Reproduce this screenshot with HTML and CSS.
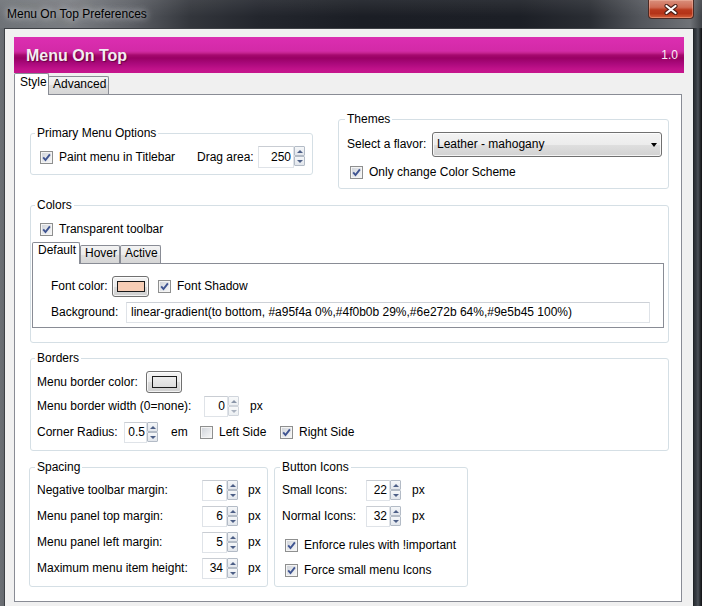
FILE: index.html
```html
<!DOCTYPE html>
<html>
<head>
<meta charset="utf-8">
<title>Menu On Top Preferences</title>
<link rel="stylesheet" href="styles.css">
</head>
<body>
<div class="window">
  <div class="titlebar">
    <span class="title">Menu On Top Preferences</span>
    <span class="close">
      <svg width="16" height="11" viewBox="0 0 16 11"><path d="M3.5 2 L12.5 9 M12.5 2 L3.5 9" stroke="#4a2018" stroke-width="4.2" stroke-linecap="round" fill="none"/><path d="M3.5 2 L12.5 9 M12.5 2 L3.5 9" stroke="#fff" stroke-width="2.2" stroke-linecap="round" fill="none"/></svg>
    </span>
  </div>
  <div class="client">
    <div class="header">
      <span class="h-title">Menu On Top</span>
      <span class="h-ver">1.0</span>
    </div>
    <div class="tabs">
      <span class="tab sel t-style">Style</span>
      <span class="tab t-adv">Advanced</span>
    </div>
    <div class="panel">
      <div class="row-top">
        <fieldset class="grp g-primary">
          <legend>Primary Menu Options</legend>
          <div class="line h22 mt6">
            <span class="cb on ml9"><svg viewBox="0 0 11 11"><path d="M2.2 5.3 L4.5 8 L8.9 2.3" fill="none" stroke="#3f5491" stroke-width="1.9"/></svg></span>
            <span class="lb w138 ml6">Paint menu in Titlebar</span>
            <span class="lb w61">Drag area:</span>
            <span class="num w36 h22">250</span>
            <span class="spinner"><span class="up"></span><span class="dn"></span></span>
          </div>
        </fieldset>
        <fieldset class="grp g-themes">
          <legend>Themes</legend>
          <div class="line h25 mt6">
            <span class="lb w85 ml8">Select a flavor:</span>
            <span class="select"><span>Leather - mahogany</span><span class="sel-arrow"></span></span>
          </div>
          <div class="line h16 mt7">
            <span class="cb on ml11"><svg viewBox="0 0 11 11"><path d="M2.2 5.3 L4.5 8 L8.9 2.3" fill="none" stroke="#3f5491" stroke-width="1.9"/></svg></span>
            <span class="lb ml6">Only change Color Scheme</span>
          </div>
        </fieldset>
      </div>

      <fieldset class="grp g-colors">
        <legend>Colors</legend>
        <div class="line h16 mt9">
          <span class="cb on ml9"><svg viewBox="0 0 11 11"><path d="M2.2 5.3 L4.5 8 L8.9 2.3" fill="none" stroke="#3f5491" stroke-width="1.9"/></svg></span>
          <span class="lb ml6">Transparent toolbar</span>
        </div>
        <div class="tabbox">
          <div class="itabs">
            <span class="itab sel w48">Default</span>
            <span class="itab w40">Hover</span>
            <span class="itab w41">Active</span>
          </div>
          <div class="ipanel">
            <div class="line mt12">
              <span class="lb w61 ml18">Font color:</span>
              <span class="cbtn w37"><span class="sw sw-peach"></span></span>
              <span class="cb on ml9"><svg viewBox="0 0 11 11"><path d="M2.2 5.3 L4.5 8 L8.9 2.3" fill="none" stroke="#3f5491" stroke-width="1.9"/></svg></span>
              <span class="lb ml6">Font Shadow</span>
            </div>
            <div class="line mt5">
              <span class="lb w75 ml18">Background:</span>
              <span class="text-in">linear-gradient(to bottom, #a95f4a 0%,#4f0b0b 29%,#6e272b 64%,#9e5b45 100%)</span>
            </div>
          </div>
        </div>
      </fieldset>

      <fieldset class="grp g-borders">
        <legend>Borders</legend>
        <div class="line h22 mt6">
          <span class="lb w109 ml6">Menu border color:</span>
          <span class="cbtn w36 h22"><span class="sw sw-gray"></span></span>
        </div>
        <div class="line mt3">
          <span class="lb w167 ml6">Menu border width (0=none):</span>
          <span class="num w24">0</span>
          <span class="spinner dis"><span class="up"></span><span class="dn"></span></span>
          <span class="lb ml11">px</span>
        </div>
        <div class="line mt5">
          <span class="lb w87 ml6">Corner Radius:</span>
          <span class="num w23 pr1">0.5</span>
          <span class="spinner"><span class="up"></span><span class="dn"></span></span>
          <span class="lb w29 ml13">em</span>
          <span class="cb"></span>
          <span class="lb w61 ml6">Left Side</span>
          <span class="cb on"><svg viewBox="0 0 11 11"><path d="M2.2 5.3 L4.5 8 L8.9 2.3" fill="none" stroke="#3f5491" stroke-width="1.9"/></svg></span>
          <span class="lb ml6">Right Side</span>
        </div>
      </fieldset>

      <div class="row-bottom">
        <fieldset class="grp g-spacing">
          <legend>Spacing</legend>
          <div class="line mt6">
            <span class="lb w165 ml7">Negative toolbar margin:</span>
            <span class="num w25 pr3">6</span>
            <span class="spinner"><span class="up"></span><span class="dn"></span></span>
            <span class="lb ml10">px</span>
          </div>
          <div class="line mt5">
            <span class="lb w165 ml7">Menu panel top margin:</span>
            <span class="num w25 pr3">6</span>
            <span class="spinner"><span class="up"></span><span class="dn"></span></span>
            <span class="lb ml10">px</span>
          </div>
          <div class="line mt5">
            <span class="lb w165 ml7">Menu panel left margin:</span>
            <span class="num w25 pr3">5</span>
            <span class="spinner"><span class="up"></span><span class="dn"></span></span>
            <span class="lb ml10">px</span>
          </div>
          <div class="line mt5">
            <span class="lb w165 ml7">Maximum menu item height:</span>
            <span class="num w25 pr3">34</span>
            <span class="spinner"><span class="up"></span><span class="dn"></span></span>
            <span class="lb ml10">px</span>
          </div>
        </fieldset>
        <fieldset class="grp g-icons">
          <legend>Button Icons</legend>
          <div class="line mt6">
            <span class="lb w84 ml7">Small Icons:</span>
            <span class="num w24">22</span>
            <span class="spinner"><span class="up"></span><span class="dn"></span></span>
            <span class="lb ml11">px</span>
          </div>
          <div class="line mt5">
            <span class="lb w84 ml7">Normal Icons:</span>
            <span class="num w24">32</span>
            <span class="spinner"><span class="up"></span><span class="dn"></span></span>
            <span class="lb ml11">px</span>
          </div>
          <div class="line h16 mt10">
            <span class="cb on ml10"><svg viewBox="0 0 11 11"><path d="M2.2 5.3 L4.5 8 L8.9 2.3" fill="none" stroke="#3f5491" stroke-width="1.9"/></svg></span>
            <span class="lb ml6">Enforce rules with !important</span>
          </div>
          <div class="line h16 mt9">
            <span class="cb on ml10"><svg viewBox="0 0 11 11"><path d="M2.2 5.3 L4.5 8 L8.9 2.3" fill="none" stroke="#3f5491" stroke-width="1.9"/></svg></span>
            <span class="lb ml6">Force small menu Icons</span>
          </div>
        </fieldset>
      </div>
    </div>
  </div>
</div>
</body>
</html>
```

FILE: styles.css
```css
* { box-sizing: border-box; }
html, body { margin: 0; padding: 0; }
body {
  font-family: "Liberation Sans", Arial, sans-serif;
  font-size: 12px;
  color: #000;
  background: #1a1c20;
}
.window {
  width: 702px;
  height: 606px;
  display: flex;
  flex-direction: column;
  overflow: hidden;
  background: linear-gradient(to right, #6b6f74 0, #666a6f 4px, #f0f0f0 4px, #f0f0f0 693px, #17191c 693px, #2c3035 694px, #353a40 696px, #4c5158 698px, #2a2d31 700px, #101114 702px);
}

/* ---------- title bar ---------- */
.titlebar {
  height: 28px;
  flex: none;
  display: flex;
  align-items: flex-start;
  padding-left: 7px;
  background:
    linear-gradient(to bottom, rgba(255,255,255,0.08), rgba(255,255,255,0) 60%),
    linear-gradient(to right, #6e7277 0px, #7a7d82 70px, #5d6066 130px, #33363c 190px, #23262d 260px, #1b1e25 360px, #1c1f26 520px, #2a2d33 590px, #52555b 640px, #6f7277 690px, #3e4146 702px);
}
.title {
  margin-top: 7px;
  line-height: 15px;
  font-size: 12px;
  color: #000;
  text-shadow: 0 0 6px rgba(220,222,226,0.9), 0 0 10px rgba(200,202,206,0.7);
}
.close {
  margin-left: auto;
  margin-right: 8px;
  width: 46px;
  height: 19px;
  display: flex;
  align-items: center;
  justify-content: center;
  border: 1px solid #4b2a24;
  border-top: none;
  border-radius: 0 0 4px 4px;
  background: linear-gradient(to bottom, #d98f7c 0%, #cf6c55 40%, #b9391d 55%, #b43318 75%, #d4603a 100%);
  box-shadow: inset 0 0 0 1px rgba(255,210,190,0.35);
}
.close svg { display: block; }

/* ---------- client ---------- */
.client {
  flex: 1;
  margin-left: 4px;
  width: 689px;
  display: flex;
  flex-direction: column;
  background: #f0f0f0;
  border-left: 1px solid #3d4045;
  border-top: 1px solid #3d4045;
  padding: 8px 9px 4px 9px;
}
.header {
  height: 36px;
  flex: none;
  display: flex;
  justify-content: space-between;
  align-items: flex-start;
  padding: 0 6px 0 12px;
  background: linear-gradient(to bottom, #db2eb1 0px, #d82cad 6px, #d32aa7 14px, #c4228f 16px, #a60a70 18px, #990064 21px, #a8087a 26px, #c0128a 32px, #c6158d 36px);
}
.h-title {
  margin-top: 10px;
  font-size: 16px;
  line-height: 18px;
  font-weight: bold;
  color: #f3eef2;
  text-shadow: 1px 1px 1px rgba(70,0,45,0.65);
}
.h-ver {
  margin-top: 11px;
  line-height: 15px;
  font-size: 12px;
  color: #fbeef7;
}
.tabs {
  height: 21px;
  flex: none;
  display: flex;
  align-items: flex-end;
}
.tab {
  height: 18px;
  border: 1px solid #898c95;
  border-bottom: none;
  border-radius: 2px 2px 0 0;
  background: linear-gradient(to bottom, #f3f3f3, #ebebeb 50%, #dedede 50%, #d6d6d6);
  line-height: 13px;
  padding-left: 4px;
  padding-top: 1px;
}
.tab.sel {
  position: relative;
  z-index: 1;
  height: 22px;
  margin-bottom: -1px;
  background: #fff;
  padding-top: 2px;
}
.t-style { width: 35px; padding-left: 5px; }
.t-adv { width: 61px; margin-left: -1px; padding-left: 4px; }

.panel {
  flex: 1;
  margin-right: 2px;
  border: 1px solid #898c95;
  background: #fff;
  padding-top: 17px;
}

/* ---------- groups ---------- */
.grp {
  margin: 0;
  padding: 0;
  min-width: 0;
  border: 1px solid #d5dfe5;
  border-radius: 3px;
}
.grp > legend {
  padding: 0 2px;
  margin-left: 4px;
  font-size: 12px;
  line-height: 14px;
}
.row-top {
  display: flex;
  align-items: center;
  height: 77px;
}
.g-primary { width: 283px; margin-left: 15px; padding-bottom: 6px; }
.g-themes { width: 331px; margin-left: 25px; padding-bottom: 8px; }
.g-themes > legend { margin-left: 6px; }
.g-colors { width: 639px; margin-left: 15px; margin-top: 9px; padding-bottom: 14px; }
.g-borders { width: 639px; margin-left: 15px; margin-top: 8px; padding-bottom: 7px; }
.row-bottom {
  display: flex;
  margin-top: 9px;
}
.g-spacing { width: 239px; margin-left: 14px; padding-bottom: 7px; }
.g-spacing > legend { margin-left: 5px; }
.g-icons { width: 194px; margin-left: 6px; padding-bottom: 8px; }
.g-icons > legend { margin-left: 5px; }

/* ---------- rows ---------- */
.line {
  display: flex;
  align-items: center;
  height: 21px;
}
.h16 { height: 16px; }
.h22 { height: 22px; }
.h25 { height: 25px; }
.lb { line-height: 15px; white-space: nowrap; flex: none; }

.mt3 { margin-top: 3px; }
.mt5 { margin-top: 5px; }
.mt6 { margin-top: 6px; }
.mt7 { margin-top: 7px; }
.mt9 { margin-top: 9px; }
.mt10 { margin-top: 10px; }
.mt12 { margin-top: 12px; }
.ml6 { margin-left: 6px; }
.ml7 { margin-left: 7px; }
.ml8 { margin-left: 8px; }
.ml9 { margin-left: 9px; }
.ml10 { margin-left: 10px; }
.ml11 { margin-left: 11px; }
.ml13 { margin-left: 13px; }
.ml18 { margin-left: 18px; }

.w23 { width: 23px; }
.w24 { width: 24px; }
.w25 { width: 25px; }
.w29 { width: 29px; }
.w36 { width: 36px; }
.w37 { width: 37px; }
.w40 { width: 40px; }
.w41 { width: 41px; }
.w48 { width: 48px; }
.w61 { width: 61px; }
.w75 { width: 75px; }
.w84 { width: 84px; }
.w85 { width: 85px; }
.w87 { width: 87px; }
.w109 { width: 109px; }
.w138 { width: 138px; }
.w165 { width: 165px; }
.w167 { width: 167px; }

/* ---------- checkbox ---------- */
.cb {
  flex: none;
  width: 13px;
  height: 13px;
  border: 1px solid #8e8f8f;
  background: linear-gradient(135deg, #cdd1d7 0%, #e6e8eb 55%, #f8f8f8 100%);
  box-shadow: inset 0 0 0 1px #f4f4f4;
}
.cb svg { display: block; width: 11px; height: 11px; }

/* ---------- inputs ---------- */
.num {
  flex: none;
  height: 21px;
  align-self: flex-start;
  border: 1px solid #dfe3e8;
  border-top-color: #c9cdd3;
  background: #fff;
  text-align: right;
  padding-right: 2px;
  line-height: 19px;
}
.num.h22 { height: 22px; line-height: 20px; }
.pr1 { padding-right: 1px; }
.pr3 { padding-right: 3px; }

.spinner {
  flex: none;
  align-self: flex-start;
  width: 11px;
  height: 20px;
  display: flex;
  flex-direction: column;
}
.spinner span {
  flex: 1;
  display: flex;
  align-items: center;
  justify-content: center;
  border: 1px solid #b3bbc6;
  border-radius: 1px;
  background: linear-gradient(to bottom, #f5f7f9, #e2e6ec);
}
.spinner .up::before {
  content: "";
  border-left: 3px solid transparent;
  border-right: 3px solid transparent;
  border-bottom: 3px solid #4d5f86;
}
.spinner .dn::before {
  content: "";
  border-left: 3px solid transparent;
  border-right: 3px solid transparent;
  border-top: 3px solid #4d5f86;
}
.spinner.dis span { border-color: #d0d5dc; background: linear-gradient(to bottom, #f8f9fa, #eceff2); }
.spinner.dis .up::before { border-bottom-color: #8a95a8; }
.spinner.dis .dn::before { border-top-color: #aab2bf; }

.select {
  flex: none;
  width: 230px;
  height: 25px;
  display: flex;
  align-items: center;
  padding: 0 4px 0 4px;
  border: 1px solid #707070;
  border-radius: 3px;
  background: linear-gradient(to bottom, #f3f3f3 0%, #ececec 50%, #dfdfdf 50%, #d2d2d2 100%);
  box-shadow: inset 0 0 0 1px rgba(255,255,255,0.75);
  line-height: 15px;
}
.sel-arrow {
  margin-left: auto;
  width: 0;
  height: 0;
  border-left: 3.5px solid transparent;
  border-right: 3.5px solid transparent;
  border-top: 4px solid #000;
}

.cbtn {
  flex: none;
  height: 21px;
  display: flex;
  align-items: center;
  justify-content: center;
  border: 1px solid #707070;
  border-radius: 3px;
  background: linear-gradient(to bottom, #f3f3f3 0%, #ebebeb 50%, #dddddd 50%, #cfcfcf 100%);
  box-shadow: inset 0 0 0 1px rgba(255,255,255,0.75);
}
.cbtn.h22 { height: 22px; }
.sw { display: block; border: 1px solid #1a1a1a; }
.sw-peach { width: 28px; height: 11px; background: #f6cdb5; }
.sw-gray { width: 25px; height: 12px; background: linear-gradient(to bottom, #ededed, #dcdcdc); }

.text-in {
  flex: none;
  width: 524px;
  height: 21px;
  border: 1px solid #dfe3e8;
  border-top-color: #cdd1d7;
  padding-left: 4px;
  line-height: 19px;
  white-space: nowrap;
  overflow: hidden;
}

/* ---------- inner tabbox ---------- */
.tabbox {
  margin: 5px 4px 0 1px;
}
.itabs {
  height: 21px;
  display: flex;
  align-items: flex-end;
}
.itab {
  height: 18px;
  border: 1px solid #898c95;
  border-bottom: none;
  border-radius: 2px 2px 0 0;
  background: linear-gradient(to bottom, #f3f3f3, #ebebeb 50%, #dedede 50%, #d6d6d6);
  line-height: 13px;
  padding-left: 4px;
  padding-top: 1px;
}
.itab.sel {
  position: relative;
  z-index: 1;
  height: 22px;
  margin-bottom: -1px;
  background: #fff;
  padding-left: 5px;
}
.ipanel {
  height: 65px;
  border: 1px solid #898c95;
  background: #fff;
}
```
